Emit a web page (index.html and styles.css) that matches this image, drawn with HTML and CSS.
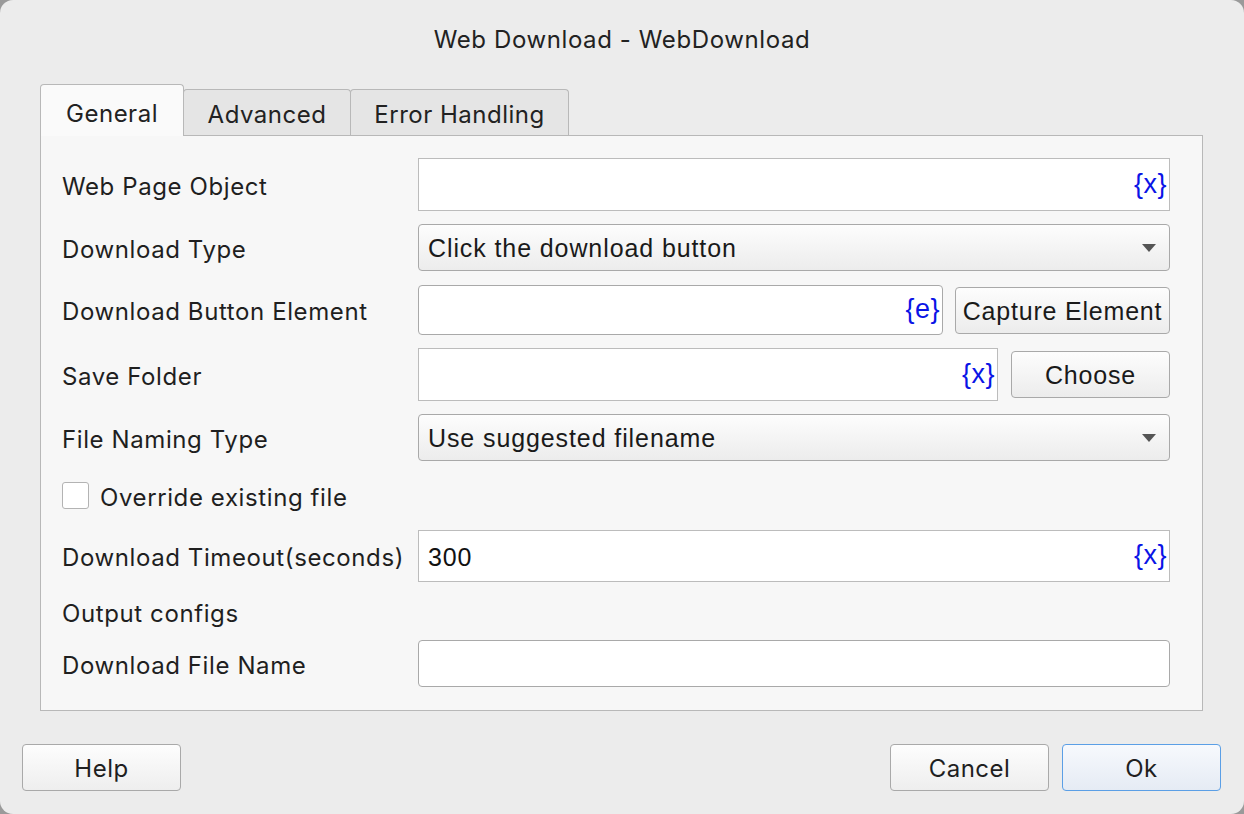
FILE: index.html
```html
<!DOCTYPE html>
<html>
<head>
<meta charset="utf-8">
<link rel="stylesheet" href="styles.css">
</head>
<body>
<div class="window">
  <div class="title">Web Download - WebDownload</div>
  <div class="tabs">
    <div class="tab active">General</div>
    <div class="tab tab-adv">Advanced</div>
    <div class="tab tab-err">Error Handling</div>
  </div>
  <div class="panel">
    <div class="row r1">
      <div class="label">Web Page Object</div>
      <div class="field square"><span class="val"></span><span class="var">{x}</span></div>
    </div>
    <div class="row r2">
      <div class="label">Download Type</div>
      <div class="select"><span class="val">Click the download button</span><span class="arrow"></span></div>
    </div>
    <div class="row r3">
      <div class="label">Download Button Element</div>
      <div class="field rounded"><span class="val"></span><span class="var">{e}</span></div>
      <div class="btn capture">Capture Element</div>
    </div>
    <div class="row r4">
      <div class="label">Save Folder</div>
      <div class="field square"><span class="val"></span><span class="var">{x}</span></div>
      <div class="btn choose">Choose</div>
    </div>
    <div class="row r5">
      <div class="label">File Naming Type</div>
      <div class="select"><span class="val">Use suggested filename</span><span class="arrow"></span></div>
    </div>
    <div class="row r6">
      <span class="checkbox"></span>
      <span class="check-label">Override existing file</span>
    </div>
    <div class="row r7">
      <div class="label">Download Timeout(seconds)</div>
      <div class="field square"><span class="val">300</span><span class="var">{x}</span></div>
    </div>
    <div class="row r8">
      <div class="label">Output configs</div>
    </div>
    <div class="row r9">
      <div class="label">Download File Name</div>
      <div class="field rounded"><span class="val"></span></div>
    </div>
  </div>
  <div class="footer">
    <div class="dbtn">Help</div>
    <div class="spacer"></div>
    <div class="dbtn">Cancel</div>
    <div class="dbtn primary">Ok</div>
  </div>
</div>
</body>
</html>
```

FILE: styles.css
```css
html, body {
  margin: 0;
  padding: 0;
  background: #9a9a9a;
}
body {
  width: 1244px;
  height: 814px;
  overflow: hidden;
  font-family: Inter, "Liberation Sans", sans-serif;
  color: #222222;
}
.window {
  width: 1244px;
  height: 814px;
  box-sizing: border-box;
  background: #ececec;
  border-radius: 13px;
  display: flex;
  flex-direction: column;
}
.title {
  height: 84px;
  box-sizing: border-box;
  padding-top: 25px;
  line-height: 30px;
  font-size: 24px;
  letter-spacing: 0.6px;
  text-align: center;
  color: #222;
}
.tabs {
  display: flex;
  align-items: flex-end;
  height: 51px;
  padding-left: 40px;
}
.tab {
  box-sizing: border-box;
  height: 46px;
  border: 1px solid #b8b8b8;
  border-bottom: none;
  border-radius: 4px 4px 0 0;
  background: #e5e5e5;
  font-size: 24px;
  letter-spacing: 0.5px;
  display: flex;
  align-items: center;
  justify-content: center;
  padding-top: 3px;
  margin-left: -1px;
}
.tab.active {
  height: 52px;
  width: 144px;
  margin-left: 0;
  margin-bottom: -1px;
  background: #fafafa;
  position: relative;
  z-index: 1;
  padding-top: 6px;
}
.tab-adv { width: 168px; }
.tab-err { width: 219px; }
.panel {
  box-sizing: border-box;
  margin-left: 40px;
  width: 1163px;
  height: 576px;
  border: 1px solid #b8b8b8;
  background: #f7f7f7;
  padding: 22px 32px 0 21px;
  display: flex;
  flex-direction: column;
}
.row {
  display: flex;
  align-items: center;
}
.label {
  width: 356px;
  flex: none;
  font-size: 24px;
  letter-spacing: 0.6px;
  color: #1f1f1f;
  white-space: nowrap;
  padding-top: 3px;
}
.r1 { height: 53px; }
.r2 { height: 47px; margin-top: 13px; }
.r3 { height: 50px; margin-top: 14px; }
.r4 { height: 53px; margin-top: 13px; }
.r5 { height: 47px; margin-top: 13px; }
.r6 { height: 27px; margin-top: 21px; }
.r7 { height: 52px; margin-top: 21px; }
.r8 { height: 36px; margin-top: 12px; }
.r9 { height: 47px; margin-top: 10px; }
.field {
  flex: 1;
  align-self: stretch;
  box-sizing: border-box;
  background: #ffffff;
  display: flex;
  align-items: center;
  justify-content: space-between;
  padding: 0 2px 0 9px;
  font-family: "Liberation Sans Narrow", "Liberation Sans", sans-serif;
  font-size: 25px;
  letter-spacing: 0.9px;
  color: #111;
}
.val { padding-top: 2px; }
.field.square { border: 1px solid #bcbcbc; }
.field.rounded {
  border: 1px solid #a9a9a9;
  border-radius: 4px;
}
.var {
  color: #0a14e6;
  font-family: "Liberation Sans Narrow", "Liberation Sans", sans-serif;
  font-size: 27px;
  letter-spacing: 0.5px;
  margin-top: -1px;
}
.select {
  flex: 1;
  align-self: stretch;
  box-sizing: border-box;
  border: 1px solid #a9a9a9;
  border-radius: 4px;
  background: linear-gradient(#fdfdfd, #ececec);
  display: flex;
  align-items: center;
  justify-content: space-between;
  padding: 0 13px 0 9px;
  font-family: "Liberation Sans Narrow", "Liberation Sans", sans-serif;
  font-size: 25px;
  letter-spacing: 0.9px;
  color: #1a1a1a;
}
.arrow {
  width: 0;
  height: 0;
  border-left: 7px solid transparent;
  border-right: 7px solid transparent;
  border-top: 8px solid #555;
  margin-top: 1px;
}
.btn {
  flex: none;
  box-sizing: border-box;
  border: 1px solid #a9a9a9;
  border-radius: 4px;
  background: linear-gradient(#fdfdfd, #ececec);
  display: flex;
  align-items: center;
  justify-content: center;
  font-family: "Liberation Sans Narrow", "Liberation Sans", sans-serif;
  font-size: 25px;
  letter-spacing: 0.8px;
  color: #1a1a1a;
  white-space: nowrap;
  padding-top: 2px;
}
.capture {
  width: 215px;
  height: 47px;
  margin-left: 12px;
}
.choose {
  width: 159px;
  height: 47px;
  margin-left: 13px;
}
.checkbox {
  width: 27px;
  height: 27px;
  box-sizing: border-box;
  border: 1px solid #b3b3b3;
  border-radius: 3px;
  background: #fff;
  flex: none;
}
.check-label {
  margin-left: 11px;
  font-size: 24px;
  letter-spacing: 0.6px;
  color: #1f1f1f;
  padding-top: 3px;
}
.footer {
  display: flex;
  margin-top: 33px;
  padding: 0 23px 0 22px;
}
.spacer { flex: 1; }
.dbtn {
  box-sizing: border-box;
  width: 159px;
  height: 47px;
  border: 1px solid #a9a9a9;
  border-radius: 4px;
  background: linear-gradient(#fdfdfd, #eeeeee);
  display: flex;
  align-items: center;
  justify-content: center;
  font-size: 24px;
  letter-spacing: 0.5px;
  color: #1f1f1f;
  padding-top: 2px;
}
.dbtn + .dbtn { margin-left: 13px; }
.dbtn.primary {
  border-color: #5b9fe6;
  background: linear-gradient(#f7f9fd, #e5ebf4);
}
```
